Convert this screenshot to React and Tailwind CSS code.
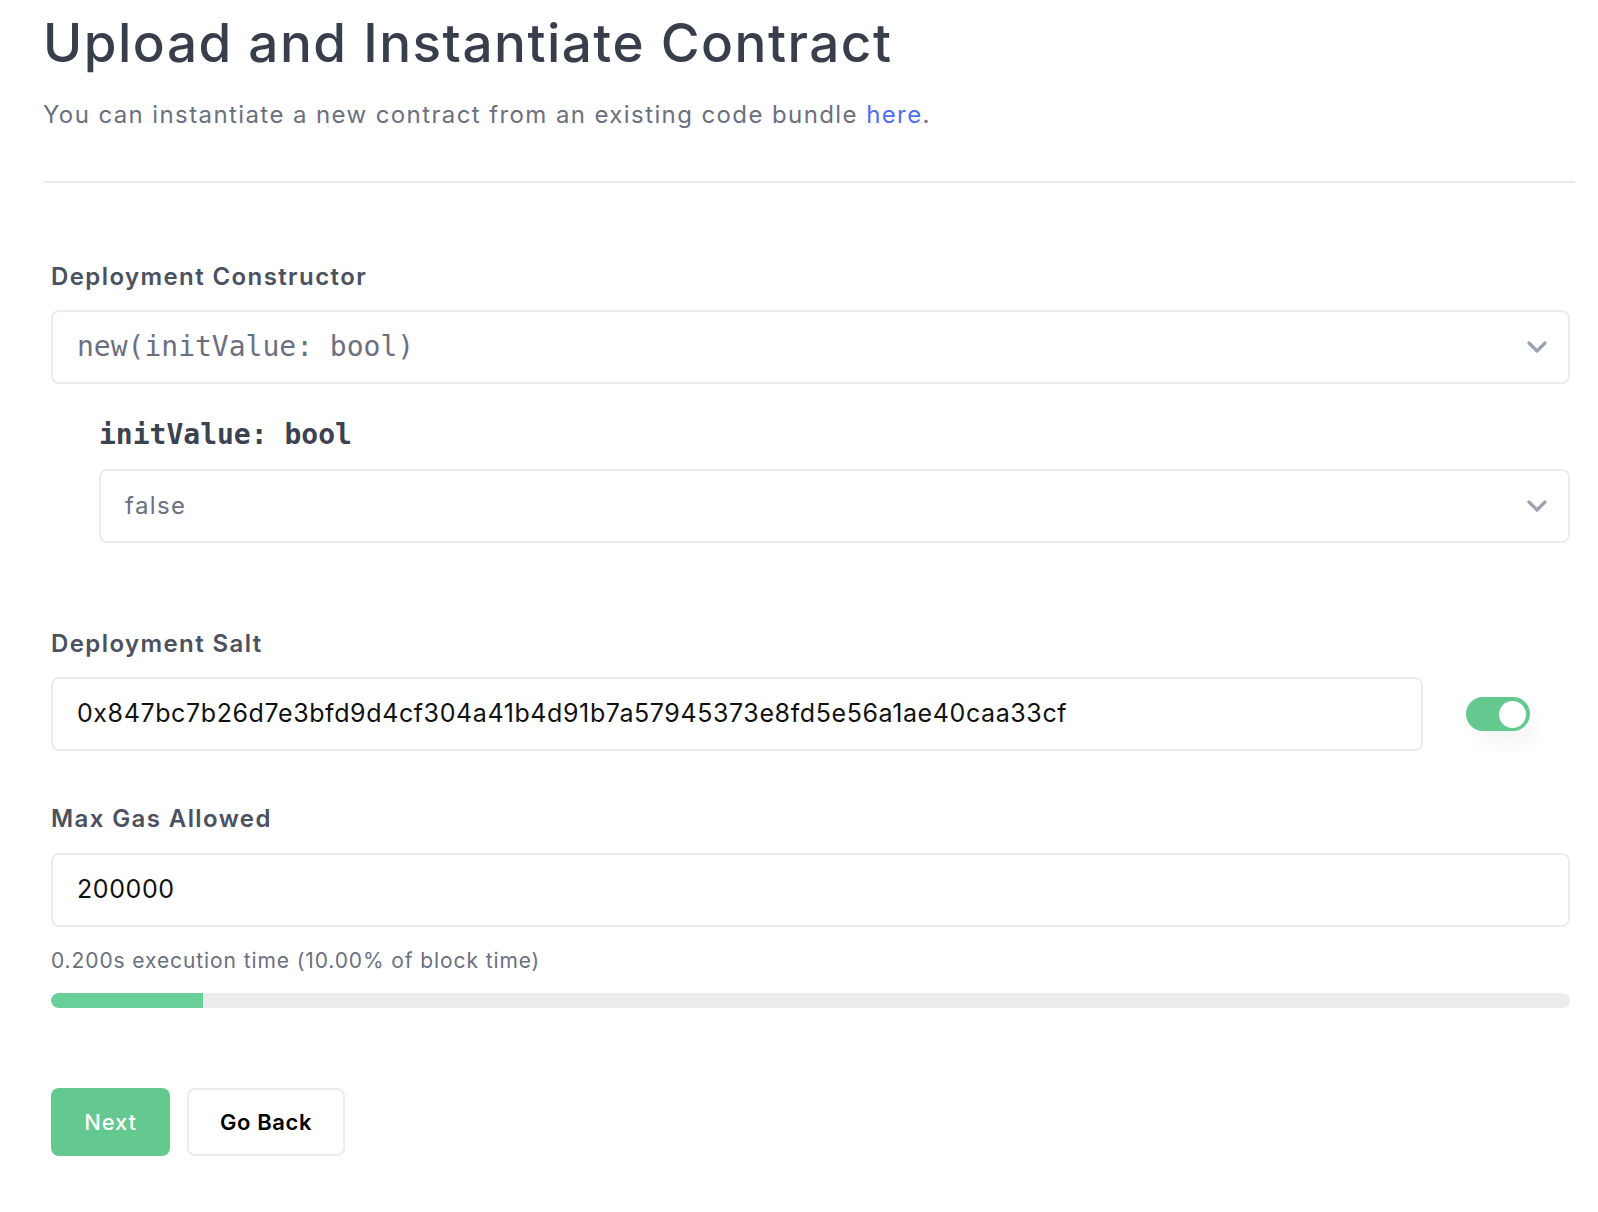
const sans = { fontFamily: 'Inter, "Noto Sans", sans-serif' };

const Chevron = () => (
  <svg width="22" height="14" viewBox="0 0 22 14" className="shrink-0">
    <path d="M3 3 L11 11 L19 3" fill="none" stroke="#9ca3af" strokeWidth="3.2" strokeLinecap="round" strokeLinejoin="round" />
  </svg>
);

const Label = ({ children }) => (
  <div className="text-[24px] font-semibold tracking-[1.4px] text-[#4b5160] leading-[30px]">{children}</div>
);

const App = () => {
  return (
    <div className="min-h-[1212px] bg-white pl-[43px] pr-[23px] pt-[8px]" style={sans}>
      <h1 className="text-[53px] font-medium text-[#383e4b] leading-[70px] tracking-[1.5px]">
        Upload and Instantiate Contract
      </h1>
      <p className="mt-[20px] text-[24px] tracking-[1.4px] text-[#6b7080] leading-[34px]">
        You can instantiate a new contract from an existing code bundle{' '}
        <a href="#" className="text-[#4f6ef0]">here</a>.
      </p>
      <div className="mt-[49px] h-[2px] bg-[#ececec]" />

      <div className="ml-[8px] mr-[5px] mt-[79px] flex flex-col">
        {/* constructor */}
        <Label>Deployment Constructor</Label>
        <div className="mt-[18px] flex h-[74px] items-center justify-between rounded-lg border-2 border-[#ececec] pl-[24px] pr-[20px]">
          <span className="font-['DejaVu_Sans_Mono',monospace] text-[28px] text-[#6b7080]">new(initValue: bool)</span>
          <Chevron />
        </div>

        <div className="ml-[48px] mt-[34px]">
          <div className="font-['DejaVu_Sans_Mono',monospace] text-[28px] font-bold leading-[34px] text-[#3c4250]">initValue: bool</div>
          <div className="mt-[17px] flex h-[74px] items-center justify-between rounded-lg border-2 border-[#ececec] pl-[24px] pr-[20px]">
            <span className="text-[24px] tracking-[1.4px] text-[#6b7080]">false</span>
            <Chevron />
          </div>
        </div>

        {/* salt */}
        <div className="mt-[86px]">
          <Label>Deployment Salt</Label>
        </div>
        <div className="mt-[18px] flex items-center">
          <div className="flex h-[74px] flex-1 items-center rounded-lg border-2 border-[#ececec] pl-[24px]">
            <span className="text-[25px] tracking-[0.6px] text-[#111]">0x847bc7b26d7e3bfd9d4cf304a41b4d91b7a57945373e8fd5e56a1ae40caa33cf</span>
          </div>
          <div className="ml-[43px] mr-[40px] flex h-[34px] w-[64px] items-center justify-end rounded-full bg-[#63c98f] pr-[4px] shadow-[8px_14px_18px_rgba(0,0,0,0.04)]">
            <div className="h-[27px] w-[27px] rounded-full bg-white" />
          </div>
        </div>

        {/* gas */}
        <div className="mt-[53px]">
          <Label>Max Gas Allowed</Label>
        </div>
        <div className="mt-[19px] flex h-[74px] items-center rounded-lg border-2 border-[#ececec] pl-[24px]">
          <span className="text-[25px] tracking-[0.6px] text-[#111]">200000</span>
        </div>
        <div className="mt-[21px] text-[21px] tracking-[0.9px] leading-[26px] text-[#6b7080]">
          0.200s execution time (10.00% of block time)
        </div>
        <div className="mt-[19px] h-[15px] w-full overflow-hidden rounded-full bg-[#ececec]">
          <div className="h-full rounded-l-full bg-[#68cf98]" style={{ width: '10%' }} />
        </div>

        {/* buttons */}
        <div className="mt-[80px] flex gap-[17px]">
          <button className="h-[68px] w-[119px] rounded-lg bg-[#63c98f] text-[22px] font-medium tracking-[0.8px] text-white">Next</button>
          <button className="h-[68px] w-[158px] rounded-lg border-2 border-[#ececec] bg-white text-[22px] font-semibold tracking-[0.6px] text-black">Go Back</button>
        </div>
      </div>
    </div>
  );
};

export default App;
